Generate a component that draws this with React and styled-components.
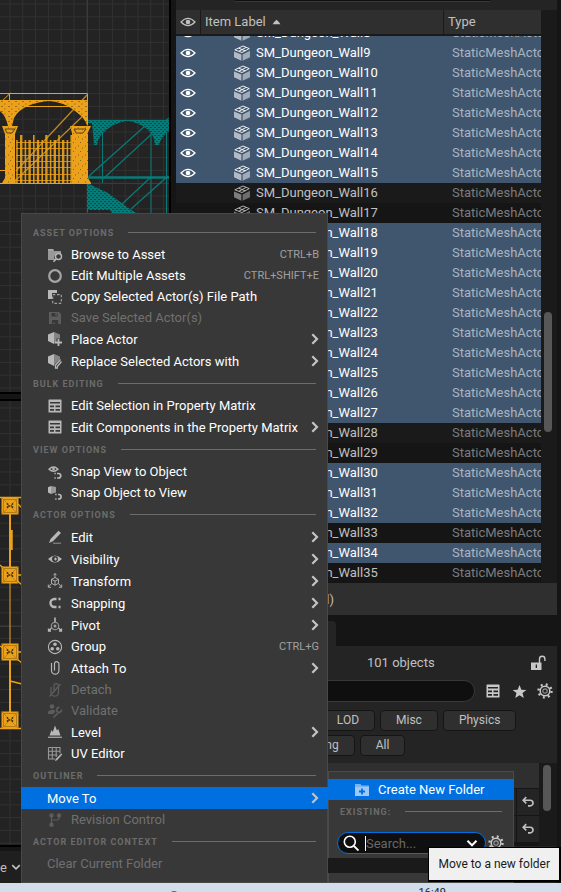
import React from "react";
import styled, { createGlobalStyle } from "styled-components";

const GlobalStyle = createGlobalStyle`
  * { box-sizing: border-box; }
  body {
    margin: 0;
    background: #151515;
    font-family: Roboto, "Liberation Sans", sans-serif;
    font-size: 13px;
    color: #c0c0c0;
  }
  button, input {
    font: inherit;
    color: inherit;
    margin: 0;
    border: 0;
    background: none;
  }
  svg { display: block; flex: none; }
`;

const Shell = styled.div`
  display: flex;
  flex-direction: column;
  height: 100vh;
  overflow: hidden;
`;

const Workspace = styled.main`
  position: relative;
  display: grid;
  grid-template-columns: 169px minmax(0, 1fr);
  flex: 1;
  min-height: 0;
`;

/* ---------- viewports ---------- */

const ViewportColumn = styled.section`
  display: flex;
  flex-direction: column;
  min-height: 0;
`;

const Viewport = styled.div`
  flex: ${(p) => (p.$grow ? "1 1 0" : "0 0 392px")};
  min-height: 0;
  overflow: hidden;
  background: #232323;
`;

const Splitter = styled.div`
  height: ${(p) => p.$size}px;
  flex: none;
  background: #151515;
  border-top: 2px solid #000;
  border-bottom: ${(p) => (p.$closed ? "2px solid #000" : "0")};
`;

const ViewportFooter = styled.div`
  display: flex;
  align-items: center;
  gap: 4px;
  height: 32px;
  flex: none;
  background: #1f1f1f;
`;

/* ---------- right side ---------- */

const SideColumn = styled.section`
  display: flex;
  flex-direction: column;
  min-width: 0;
  min-height: 0;
  overflow: hidden;
  padding: 0 4px 0 5px;
  border-left: 2px solid #000;
  background: #151515;
`;

const OutlinerTop = styled.div`
  height: 10px;
  flex: none;
  padding: 0 66px 0 58px;
  background: #242424;
`;

const OutlinerSearchEdge = styled.div`
  height: 2px;
  background: #0f0f0f;
  border-bottom: 1px solid #383838;
  border-radius: 0 0 8px 8px;
`;

const OutlinerBody = styled.div`
  display: flex;
  flex: none;
  background: #1a1a1a;
`;

const OutlinerClip = styled.div`
  flex: 1;
  min-width: 0;
`;

const OutlinerTable = styled.table`
  width: 100%;
  table-layout: fixed;
  border-collapse: separate;
  border-spacing: 0;
`;

const HeadCell = styled.th`
  width: ${(p) => p.$width || "auto"};
  height: 26px;
  padding: 0 0 0 4px;
  background: #2f2f2f;
  border-bottom: 2px solid #1a1a1a;
  border-left: ${(p) => (p.$first ? "0" : "1px solid #1a1a1a")};
  text-align: left;
  font-weight: 400;
  line-height: 20px;
  white-space: nowrap;
`;

const HeadLabel = styled.span`
  display: flex;
  align-items: center;
  gap: 6px;
`;

const ActorRow = styled.tr`
  background: ${(p) => (p.$selected ? "#40566f" : p.$even ? "#1a1a1a" : "#151515")};
  color: ${(p) => (p.$selected ? "#ffffff" : "#c0c0c0")};
`;

const ActorCell = styled.td`
  padding: 0 0 0 ${(p) => p.$pad}px;
  overflow: hidden;
`;

const CellContent = styled.div`
  display: flex;
  align-items: flex-end;
  height: ${(p) => (p.$clipped ? 7 : 20)}px;
  overflow: hidden;
  white-space: nowrap;
  color: ${(p) => (p.$type ? (p.$selected ? "#a9b4bf" : "#7c7c7c") : "inherit")};
`;

const CellLine = styled.span`
  display: flex;
  align-items: center;
  gap: 6px;
  flex: none;
  height: 20px;
  line-height: 18px;
`;

const ScrollGutter = styled.div`
  width: ${(p) => p.$width}px;
  flex: none;
  padding: ${(p) => p.$offset}px 5px 0 3px;
  background: #1a1a1a;
`;

const ScrollThumb = styled.div`
  width: 8px;
  height: ${(p) => p.$length}px;
  margin: 0 auto;
  border-radius: 4px;
  background: #575757;
`;

const StatusBar = styled.div`
  display: flex;
  align-items: center;
  height: 32px;
  flex: none;
  padding-left: 10px;
  background: #2f2f2f;
`;

const TabStrip = styled.div`
  display: flex;
  align-items: flex-end;
  height: 31px;
  flex: none;
`;

const Tab = styled.button`
  width: 160px;
  height: 25px;
  border-radius: 4px 4px 0 0;
  background: #242424;
`;

const DetailsPanel = styled.div`
  display: flex;
  flex-direction: column;
  flex: 1;
  min-height: 0;
  background: #242424;
`;

const DetailsSummary = styled.div`
  display: flex;
  align-items: center;
  justify-content: space-between;
  height: 33px;
  flex: none;
  padding: 0 4px 0 191px;
`;

const DetailsTools = styled.div`
  display: flex;
  align-items: center;
  height: 24px;
  flex: none;
  gap: 10px;
  padding: 0 4px 0 8px;
`;

const DetailsSearch = styled.input`
  flex: 1;
  min-width: 0;
  height: 22px;
  border: 1px solid #383838;
  border-radius: 11px;
  background: #0f0f0f;
`;

const IconButton = styled.button`
  display: grid;
  place-items: center;
  flex: none;
  width: ${(p) => p.$width || 16}px;
  height: 16px;
  padding: 0;
  color: #c8c8c8;
`;

const Chips = styled.div`
  padding-top: 7px;
`;

const ChipRow = styled.div`
  display: flex;
  gap: 5px;
  flex: none;
  height: 25px;
  padding-left: ${(p) => p.$pad}px;
`;

const Chip = styled.button`
  height: 21px;
  padding: 0 15px;
  border: 1px solid #151515;
  border-radius: 4px;
  background: #2f2f2f;
  font-size: 12px;
  line-height: 19px;
`;

const Properties = styled.div`
  display: flex;
  flex: none;
  height: 83px;
  margin-top: 3px;
`;

const PropertyRows = styled.div`
  flex: 1;
  background: #151515;
`;

const PropertyRow = styled.div`
  display: flex;
  justify-content: flex-end;
  gap: 1px;
  height: ${(p) => (p.$head ? 26 : 27)}px;
  border-bottom: 1px solid #151515;
  background: ${(p) => (p.$head ? "#2f2f2f" : "#151515")};
`;

const PropertyValue = styled.div`
  flex: 1;
  background: #242424;
`;

const ResetCell = styled.div`
  display: grid;
  place-items: center;
  width: 22px;
  background: #242424;
`;

/* ---------- menus ---------- */

const MenuPanel = styled.div`
  position: absolute;
  left: 21px;
  top: 213px;
  width: 307px;
  padding: 8px 0 9px;
  background: #383838;
  box-shadow: inset 0 0 0 1px #484848;
`;

const MenuHeading = styled.div`
  display: flex;
  align-items: center;
  gap: 14px;
  height: 23px;
  padding: 0 12px;
  font-size: 9px;
  font-weight: 700;
  letter-spacing: 1px;
  color: #6c6c6c;
  white-space: nowrap;

  &::after {
    content: "";
    flex: 1;
    height: 1px;
    background: #6c6c6c;
  }
`;

const MenuRow = styled.button`
  display: flex;
  align-items: center;
  gap: 8px;
  width: 100%;
  height: ${(p) => (p.$tall ? 22 : 21)}px;
  padding: 0 9px 0 26px;
  text-align: left;
  white-space: nowrap;
  color: ${(p) => (p.disabled ? "#707070" : "#ffffff")};
  background: ${(p) => (p.$active ? "#0070e0" : "transparent")};
`;

const MenuIcon = styled.span`
  color: ${(p) => (p.$off ? "#5c5c5c" : "#b8b8b8")};
`;

const MenuLabel = styled.span`
  flex: 1;
`;

const Shortcut = styled.kbd`
  font-family: inherit;
  font-size: 11px;
  color: #a0a0a0;
`;

const SubMenu = styled.div`
  position: absolute;
  left: 328px;
  top: 771px;
  bottom: 0;
  width: 186px;
  padding-top: 8px;
  background: #383838;
  box-shadow: inset 0 0 0 1px #4a4a4a;
`;

const SubMenuAction = styled.button`
  display: flex;
  align-items: center;
  gap: 8px;
  width: 100%;
  height: 21px;
  padding: 0 26px;
  background: #0070e0;
  color: #ffffff;
  white-space: nowrap;
`;

const FolderSearchRow = styled.div`
  display: flex;
  align-items: center;
  gap: 2px;
  height: 22px;
  margin: 9px 10px 4px 9px;
`;

const FolderSearch = styled.label`
  display: flex;
  align-items: center;
  gap: 6px;
  flex: 1;
  min-width: 0;
  height: 22px;
  padding: 0 7px 0 5px;
  border: 1px solid #0070e0;
  border-radius: 11px;
  background: #0f0f0f;
  color: #ffffff;
`;

const FolderInput = styled.input`
  flex: 1;
  min-width: 0;
  width: 0;
  height: 15px;
  padding: 0;
  border-left: 1px solid #ffffff;
  outline: none;
  &::placeholder { color: #686868; opacity: 1; }
`;

const FolderList = styled.div`
  height: 15px;
  background: #1a1a1a;
`;

const Tooltip = styled.div`
  position: absolute;
  right: 0;
  bottom: 1px;
  padding: 8px 9px;
  border: 1px solid #000;
  border-width: 1px 2px 2px 1px;
  background: #f0f0f0;
  color: #1a1a1a;
  font-size: 12px;
  line-height: 16px;
  white-space: nowrap;
`;

const Taskbar = styled.footer`
  display: flex;
  align-items: flex-start;
  justify-content: space-between;
  height: 9px;
  flex: none;
  overflow: hidden;
  padding: 3px 115px 0 168px;
  background: #d3deec;
  color: #222;
  font-size: 11px;
`;

/* ---------- icons ---------- */

const strokeProps = { fill: "none", stroke: "currentColor" };

const iconShapes = {
  browse: (
    <>
      <path d="M1 2h5l1 2h7v3.2a4 4 0 0 0-5.500 5.800H1z" fill="currentColor" opacity=".75" />
      <path d="M1 2h5l1 1.500H1z" fill="currentColor" opacity=".6" />
      <circle cx="11.500" cy="9.500" r="3" {...strokeProps} strokeWidth="1.400" />
      <path d="M9.300 11.800L6.500 14.800" {...strokeProps} strokeWidth="1.600" />
    </>
  ),
  ring: <circle cx="8" cy="8" r="5.800" {...strokeProps} strokeWidth="2.200" opacity=".85" />,
  copy: (
    <>
      <path d="M1 1h9v3H5v6H1z" fill="currentColor" />
      <rect x="5.700" y="5.700" width="8.600" height="8.600" {...strokeProps} strokeWidth="1.200" strokeDasharray="2.600 1.700" opacity=".8" />
    </>
  ),
  save: (
    <path fillRule="evenodd" d="M2 2h10l2 2v10H2zM4.500 3v3.500h6V3zM8.300 3h1.500v2.500H8.300zM5 10v4h1.200v-1.500h1.500V14h3.500v-4z" fill="currentColor" />
  ),
  place: (
    <>
      <path d="M7 1l6 2.500v4h-3.500v3.100L7 13z" fill="currentColor" opacity=".6" />
      <path d="M1 3.500L7 1v12l-6-3z" fill="currentColor" />
      <path d="M11.500 8v7M8 11.500h7" {...strokeProps} strokeWidth="1.800" />
    </>
  ),
  replace: (
    <>
      <path d="M1 3.500L7 1v12l-6-3z" fill="currentColor" />
      <path d="M7 1l6 2.500V6L8 11l-1 2z" fill="currentColor" opacity=".6" />
      <path d="M8.300 12.500L13.500 6.500M10 14l4.500-5.500M8.500 12v3h2.500" {...strokeProps} strokeWidth="1.300" />
    </>
  ),
  matrix: (
    <path
      fillRule="evenodd"
      d="M2 1.500h12a.5.5 0 0 1 .5.5v12a.5.5 0 0 1-.5.5H2a.5.5 0 0 1-.5-.5V2a.5.5 0 0 1 .5-.5zM3 4v1.500h10V4zM3 7.500v1.800h4V7.500zM8.500 7.500v1.800H13V7.500zM3 11v1.800h4V11zM8.500 11v1.800H13V11z"
      fill="currentColor"
    />
  ),
  snapView: (
    <>
      <path d="M2 5.200Q6.500 .8 11 5.200Q6.500 9.200 2 5.200z" {...strokeProps} strokeWidth="1.300" />
      <circle cx="6.500" cy="5" r="1.300" fill="currentColor" />
      <path d="M10 9.500h1.500a2.200 2.200 0 0 1 0 4.500H10" {...strokeProps} strokeWidth="1.700" />
      <path d="M7.400 9.500h1.400M7.400 14h1.400" {...strokeProps} strokeWidth="1.700" />
    </>
  ),
  snapObject: (
    <>
      <path d="M1 2.200L4 1v8L1 7.500z" fill="currentColor" />
      <path d="M4 1l5 1v5.500L4 9z" fill="currentColor" opacity=".75" />
      <path d="M11 9.500h.8a2.200 2.200 0 0 1 0 4.500H11" {...strokeProps} strokeWidth="1.700" />
      <path d="M8.200 9.500h1.400M8.200 14h1.400" {...strokeProps} strokeWidth="1.700" />
    </>
  ),
  edit: (
    <>
      <path d="M11.500 1.800l2.500 2.300L6 12.300l-4 1.700 1.500-4z" fill="currentColor" />
      <path d="M6 14.200h8" {...strokeProps} strokeWidth="1" opacity=".7" />
    </>
  ),
  eye: (
    <>
      <path d="M1 8Q8 .8 15 8Q8 15.200 1 8z" {...strokeProps} strokeWidth="1.200" />
      <circle cx="8" cy="8" r="2.300" fill="currentColor" />
    </>
  ),
  eyeSolid: (
    <path fillRule="evenodd" d="M1 8Q8 1 15 8Q8 15 1 8zM8 5a3 3 0 1 0 .01 6A3 3 0 0 0 8 5zM8.500 6.300L10 8 8.500 9.800 7 8z" fill="currentColor" />
  ),
  transform: (
    <path d="M8 .5v4M8 4.500L4.500 6.300v4L8 12.200l3.500-1.900v-4zM4.500 6.300L8 8.200l3.500-1.900M8 8.200v4M4.500 10.500l-3 3.500M11.500 10.500l3 3.500M6.500 2.200L8 .5l1.500 1.700M1.300 11.500V14.300h2.800M14.700 11.500v2.800h-2.800" {...strokeProps} strokeWidth="1" opacity=".9" />
  ),
  magnet: (
    <>
      <path d="M9.500 4H7.500a4 4 0 0 0 0 8h2" {...strokeProps} strokeWidth="2.400" />
      <path d="M11.500 4h2M11.500 12h2" {...strokeProps} strokeWidth="2.400" />
    </>
  ),
  pivot: (
    <>
      <path d="M8 .5v4.500" {...strokeProps} strokeWidth="1.600" />
      <path d="M4.500 11l-3 3M11.500 11l3 3M1.500 11.500V14H4M14.500 11.500V14H12" {...strokeProps} strokeWidth="1.300" />
      <circle cx="8" cy="9" r="3.700" {...strokeProps} strokeWidth="1.200" opacity=".7" />
      <circle cx="8" cy="9" r="1.500" fill="currentColor" opacity=".8" />
    </>
  ),
  group: (
    <>
      <circle cx="8" cy="8" r="6.600" {...strokeProps} strokeWidth="1.100" />
      <circle cx="8" cy="5.200" r="1.800" fill="currentColor" />
      <circle cx="5.200" cy="9.700" r="1.800" fill="currentColor" />
      <circle cx="10.800" cy="9.700" r="1.800" fill="currentColor" />
    </>
  ),
  clip: (
    <path d="M4.500 3v7.500a3.700 3.700 0 0 0 7.400 0V4.500a2.200 2.200 0 0 0-4.400-1V10.500" {...strokeProps} strokeWidth="1.200" />
  ),
  detach: (
    <>
      <path d="M4 5v6a3.800 3.800 0 0 0 7.500 0V4.500a2.300 2.300 0 0 0-4.500-1V10" {...strokeProps} strokeWidth="1.300" />
      <path d="M13.500 2L2.500 14.500" {...strokeProps} strokeWidth="1.400" />
    </>
  ),
  validate: (
    <>
      <circle cx="5" cy="3.500" r="2.300" fill="currentColor" />
      <path d="M1 11V8.500Q5 5.500 8.500 8l-2 3z" fill="currentColor" />
      <path d="M6.500 14.500l5-5M14.500 6.500a2.500 2.500 0 1 1-2-2" {...strokeProps} strokeWidth="1.700" />
    </>
  ),
  level: (
    <>
      <path d="M2.500 11.500L4.500 6l1.300 2L8 1.500l2 5 1.300-1.500 2.200 6.500z" fill="currentColor" />
      <path d="M1 13.300h14" {...strokeProps} strokeWidth="1.400" opacity=".8" />
    </>
  ),
  uv: (
    <>
      <path d="M1.500 1.500h11.500v6M8 13H1.500V1.500M1.500 5.200H13M1.500 9h9M5.300 1.500V13M9.200 1.500V11" {...strokeProps} strokeWidth="1.100" opacity=".75" />
      <path d="M14.300 7.500l1 1-5.300 5.700-2 .8.700-2z" fill="currentColor" />
    </>
  ),
  branch: (
    <>
      <circle cx="4.500" cy="3.500" r="2.200" fill="currentColor" />
      <circle cx="12" cy="3.500" r="2.200" fill="currentColor" />
      <circle cx="4.500" cy="12.800" r="2.200" fill="currentColor" />
      <path d="M4.500 3.500v9M12 4v2.500Q12 8 10 8H4.500" {...strokeProps} strokeWidth="1.200" />
    </>
  ),
  mesh: (
    <>
      <path d="M0 6.500l7.400 3v6.300L0 12.300z" fill="currentColor" opacity=".6" />
      <path d="M8.600 9.500L16 5.800v6.400l-7.400 3.600z" fill="currentColor" opacity=".5" />
      <path d="M.8 4.800L9 1l6.300 2.600L8 7.500zM4.700 3.200l6.500 2.600M5 6.200l7-3.700" {...strokeProps} strokeWidth="1" opacity=".9" />
    </>
  ),
  sortUp: <path d="M1 11Q2 8 8 3q6 5 7 8z" fill="currentColor" />,
  unlock: (
    <>
      <path fillRule="evenodd" d="M1 7.500h10.500V15H1zM5.700 9.500v3.500h1.300V9.500z" fill="currentColor" />
      <path d="M9.500 8V4a2.700 2.700 0 0 1 5.400 0v2" {...strokeProps} strokeWidth="1.400" />
    </>
  ),
  star: <path d="M8 1l2 5 5.300.3-4.100 3.400 1.400 5.200L8 12l-4.600 2.900 1.400-5.200L.7 6.300 6 6z" fill="currentColor" />,
  gear: (
    <>
      <circle cx="8" cy="8" r="4.800" {...strokeProps} strokeWidth="1.500" />
      <circle cx="8" cy="8" r="2.200" {...strokeProps} strokeWidth="1.200" opacity=".65" />
      <circle cx="8" cy="8" r="6.500" {...strokeProps} strokeWidth="2.400" strokeDasharray="1.900 3.205" />
    </>
  ),
  reset: <path d="M6 2.500L2.500 6 6 9.500M2.500 6H10.500a3.200 3.200 0 0 1 0 6.400H8" {...strokeProps} strokeWidth="1.900" />,
  search: (
    <>
      <circle cx="6.800" cy="6.800" r="5.500" {...strokeProps} strokeWidth="1.600" />
      <path d="M10.800 10.800l4.700 4.700" {...strokeProps} strokeWidth="1.900" />
    </>
  ),
  down: <path d="M2 5l6 6 6-6" {...strokeProps} strokeWidth="2.600" />,
  newFolder: (
    <>
      <path d="M1 2h5.500l1 1.500H15V5H1z" fill="#79b4f0" />
      <path d="M1 5h14v9H1z" fill="#9cc9f5" />
      <path d="M8 6.500v6M5 9.500h6" fill="none" stroke="#0070e0" strokeWidth="1.800" />
    </>
  ),
};

function Icon({ name, size = 16 }) {
  return (
    <svg width={size} height={size} viewBox="0 0 16 16" aria-hidden="true">
      {iconShapes[name]}
    </svg>
  );
}

function Chevron() {
  return (
    <svg width="8" height="12" viewBox="0 0 8 12" aria-hidden="true">
      <path d="M1.300 1.300L6 6l-4.700 4.700" fill="none" stroke="#c4c4c4" strokeWidth="2.200" />
    </svg>
  );
}

/* ---------- wireframe scenes ---------- */

const ORANGE = "#eba21a";
const TEAL = "#087b78";

function GridPattern({ id, x, y }) {
  return (
    <pattern id={id} x={x} y={y} width="12.8" height="12.8" patternUnits="userSpaceOnUse">
      <path d="M0 .5H12.8M.5 0V12.8" stroke="#303030" strokeWidth="1" fill="none" />
    </pattern>
  );
}

function FrontScene() {
  const bars = Array.from({ length: 14 }, (_, i) => 17 + i * 4.2);
  const rails = [142, 148, 155, 161, 167, 174, 180];
  return (
    <svg width="100%" height="100%" aria-hidden="true">
      <defs>
        <GridPattern id="gridFront" x="9.500" y="3.500" />
        <pattern id="meshOrange" width="7" height="5" patternUnits="userSpaceOnUse">
          <rect width="7" height="5" fill={ORANGE} />
          <path d="M1 1.500h2M4 4h1.500" stroke="#8b601a" strokeWidth=".8" />
        </pattern>
        <pattern id="meshTeal" width="4" height="4" patternUnits="userSpaceOnUse">
          <rect width="4" height="4" fill={TEAL} />
          <path d="M0 1.500h2M2 3.500h2" stroke="#164544" strokeWidth="1" />
        </pattern>
        <pattern id="stone" width="7" height="9" patternUnits="userSpaceOnUse">
          <rect width="7" height="9" fill={ORANGE} />
          <path d="M1 2h1M5 4h1M3 7.500h1" stroke="#8b601a" strokeWidth="1" />
        </pattern>
      </defs>
      <rect width="100%" height="100%" fill="url(#gridFront)" />
      <path d="M87.500 0V392" stroke="#3a3a3a" />
      <path d="M92 183.500H169" stroke="#a30d0d" />
      <g stroke={TEAL} fill="none">
        <path d="M87.500 120V212M102.500 124V183M151 124V213M166.500 121V213" />
        <path d="M89 176L145 126M104 178L169 118M121 205L151 177M131 209L168 176M113 213L121 205" strokeWidth="1.200" />
        <path d="M87 177.500H169" strokeWidth="2.500" />
      </g>
      <path d="M88 120H169V131Q161 137 159 145H155Q154 134 147 129Q136 121 126 121Q112 123 101 135Q98 139 97 145H94L92 123H88z" fill="url(#meshTeal)" />
      <path d="M87 183L108 193 127 207 136 213H112L110 210H87z" fill="url(#meshTeal)" />
      <g stroke={ORANGE} fill="none">
        <path d="M0 93.500H87.500V125M0 103L10.500 93M9.500 93V126M0 170.500H5M24 106.500H84" />
        <path d="M16 171L87 95M16 180L87 112" strokeWidth="1.200" opacity=".8" />
        {bars.map((x, i) => (
          <path key={x} d={`M${x} ${i % 3 === 1 ? 135 : 140}V183`} strokeWidth={i % 2 ? 2.4 : 1.6} opacity=".9" />
        ))}
        {rails.map((y) => (
          <path key={y} d={`M16 ${y}.500H72`} opacity=".8" />
        ))}
        <path d="M0 183.500H91" />
      </g>
      <path d="M0 100H87V125Q84 118 80 115Q71 107 63 104Q55 101 48 101Q38 102 30 105Q18 110 14 118L12 126H8Q6 116 0 111z" fill="url(#meshOrange)" />
      <path d="M2 126H18L15 134V178L17 183H2L5 178V134zM70 126H91L88 132V178L91 183H70L72 178V133z" fill="url(#stone)" />
      <path d="M5 129H15L12 133H7zM74 129H86L83 133H76z" fill="none" stroke="#5b4218" />
    </svg>
  );
}

function TopScene() {
  const posts = [105, 174, 251, 319];
  return (
    <svg width="100%" height="100%" aria-hidden="true">
      <defs>
        <GridPattern id="gridTop" x="9.500" y="6.500" />
      </defs>
      <rect width="100%" height="100%" fill="url(#gridTop)" />
      <path d="M0 225.500H169" stroke="#3a3a3a" />
      <g stroke={ORANGE} fill="none">
        <path d="M10 105V174M10 252V328" strokeWidth="2" />
        <path d="M11.500 129V149" strokeWidth="2.500" />
        <path d="M10 174V252" strokeWidth="2" opacity=".5" />
        <path d="M0 96.500H21M0 327.500H21M18 103l4 4M0 164l22 20M18 174H22M0 245l22 17M18 251H22M10 280l12 3" strokeWidth="1.300" />
      </g>
      {posts.map((y) => (
        <g key={y} transform={`translate(10 ${y})`}>
          <rect x="-8.500" y="-8.500" width="17" height="17" fill={ORANGE} />
          <rect x="-6.500" y="-6.500" width="13" height="13" fill="none" stroke="#b57b15" />
          <path d="M-8 -8L8 8M8 -8L-8 8" stroke="#b57b15" strokeWidth=".8" />
          <path d="M-2.500 -3V3M2.500 -3V3M-2 0H2" stroke="#4d3814" strokeWidth="1.400" strokeDasharray="2 1" />
        </g>
      ))}
    </svg>
  );
}

/* ---------- data ---------- */

const unselected = new Set([16, 17, 28, 29, 33, 35]);
const actors = Array.from({ length: 28 }, (_, i) => {
  const n = i + 8;
  return { n, name: `SM_Dungeon_Wall${n}`, type: "StaticMeshActor", selected: !unselected.has(n) };
});

const menu = [
  {
    title: "ASSET OPTIONS",
    items: [
      { icon: "browse", label: "Browse to Asset", keys: "CTRL+B" },
      { icon: "ring", label: "Edit Multiple Assets", keys: "CTRL+SHIFT+E" },
      { icon: "copy", label: "Copy Selected Actor(s) File Path" },
      { icon: "save", label: "Save Selected Actor(s)", off: true },
      { icon: "place", label: "Place Actor", sub: true },
      { icon: "replace", label: "Replace Selected Actors with", sub: true },
    ],
  },
  {
    title: "BULK EDITING",
    items: [
      { icon: "matrix", label: "Edit Selection in Property Matrix" },
      { icon: "matrix", label: "Edit Components in the Property Matrix", sub: true },
    ],
  },
  {
    title: "VIEW OPTIONS",
    items: [
      { icon: "snapView", label: "Snap View to Object" },
      { icon: "snapObject", label: "Snap Object to View" },
    ],
  },
  {
    title: "ACTOR OPTIONS",
    items: [
      { icon: "edit", label: "Edit", sub: true },
      { icon: "eyeSolid", label: "Visibility", sub: true },
      { icon: "transform", label: "Transform", sub: true },
      { icon: "magnet", label: "Snapping", sub: true },
      { icon: "pivot", label: "Pivot", sub: true },
      { icon: "group", label: "Group", keys: "CTRL+G" },
      { icon: "clip", label: "Attach To", sub: true },
      { icon: "detach", label: "Detach", off: true },
      { icon: "validate", label: "Validate", off: true },
      { icon: "level", label: "Level", sub: true },
      { icon: "uv", label: "UV Editor" },
    ],
  },
  {
    title: "OUTLINER",
    items: [
      { label: "Move To", sub: true, active: true },
      { icon: "branch", label: "Revision Control", off: true },
    ],
  },
  {
    title: "ACTOR EDITOR CONTEXT",
    items: [{ label: "Clear Current Folder", off: true }],
  },
];

/* ---------- parts ---------- */

function Outliner() {
  return (
    <OutlinerBody>
      <OutlinerClip>
        <OutlinerTable>
          <thead>
            <tr>
              <HeadCell $width="24px" $first aria-label="Visibility"><Icon name="eye" /></HeadCell>
              <HeadCell>
                <HeadLabel>Item Label <Icon name="sortUp" size={9} /></HeadLabel>
              </HeadCell>
              <HeadCell $width="98px">Type</HeadCell>
            </tr>
          </thead>
          <tbody>
            {actors.map(({ n, name, type, selected }) => {
              const clipped = n === 8;
              return (
                <ActorRow key={n} $selected={selected} $even={n % 2 === 0}>
                  <ActorCell $pad={4}>
                    <CellContent $clipped={clipped}>
                      <CellLine>{selected && <Icon name="eye" />}</CellLine>
                    </CellContent>
                  </ActorCell>
                  <ActorCell $pad={34}>
                    <CellContent $clipped={clipped}>
                      <CellLine><Icon name="mesh" />{name}</CellLine>
                    </CellContent>
                  </ActorCell>
                  <ActorCell $pad={9}>
                    <CellContent $clipped={clipped} $type $selected={selected}>
                      <CellLine>{type}</CellLine>
                    </CellContent>
                  </ActorCell>
                </ActorRow>
              );
            })}
          </tbody>
        </OutlinerTable>
      </OutlinerClip>
      <ScrollGutter $width={16} $offset={302}><ScrollThumb $length={120} /></ScrollGutter>
    </OutlinerBody>
  );
}

function FilterChips() {
  return (
    <Chips>
      <ChipRow $pad={67}>
        <Chip>General</Chip>
        <Chip>LOD</Chip>
        <Chip>Misc</Chip>
        <Chip>Physics</Chip>
      </ChipRow>
      <ChipRow $pad={92}>
        <Chip>Streaming</Chip>
        <Chip>All</Chip>
      </ChipRow>
    </Chips>
  );
}

function Details() {
  return (
    <DetailsPanel>
      <DetailsSummary>
        <span>101 objects</span>
        <IconButton $width={30} aria-label="Unlock"><Icon name="unlock" /></IconButton>
      </DetailsSummary>
      <DetailsTools>
        <DetailsSearch type="text" aria-label="Search details" />
        <IconButton aria-label="Property matrix"><Icon name="matrix" /></IconButton>
        <IconButton aria-label="Favorites"><Icon name="star" size={15} /></IconButton>
        <IconButton aria-label="Settings"><Icon name="gear" /></IconButton>
      </DetailsTools>
      <FilterChips />
      <Properties>
        <PropertyRows>
          <PropertyRow $head />
          <PropertyRow><PropertyValue /><ResetCell><Icon name="reset" size={14} /></ResetCell></PropertyRow>
          <PropertyRow><PropertyValue /><ResetCell><Icon name="reset" size={14} /></ResetCell></PropertyRow>
        </PropertyRows>
        <ScrollGutter $width={18} $offset={2}><ScrollThumb $length={46} /></ScrollGutter>
      </Properties>
    </DetailsPanel>
  );
}

function ContextMenu() {
  return (
    <MenuPanel role="menu">
      {menu.map((section) => (
        <React.Fragment key={section.title}>
          <MenuHeading>{section.title}</MenuHeading>
          {section.items.map((item) => (
            <MenuRow key={item.label} role="menuitem" disabled={item.off} $tall={item.sub} $active={item.active}>
              {item.icon && <MenuIcon $off={item.off}><Icon name={item.icon} /></MenuIcon>}
              <MenuLabel>{item.label}</MenuLabel>
              {item.keys && <Shortcut>{item.keys}</Shortcut>}
              {item.sub && <Chevron />}
            </MenuRow>
          ))}
        </React.Fragment>
      ))}
    </MenuPanel>
  );
}

function MoveToMenu() {
  return (
    <SubMenu role="menu">
      <SubMenuAction role="menuitem"><Icon name="newFolder" />Create New Folder</SubMenuAction>
      <MenuHeading>EXISTING:</MenuHeading>
      <FolderSearchRow>
        <FolderSearch>
          <Icon name="search" />
          <FolderInput type="text" placeholder="Search..." aria-label="Search folders" />
          <Icon name="down" size={12} />
        </FolderSearch>
        <IconButton aria-label="Search settings"><Icon name="gear" /></IconButton>
      </FolderSearchRow>
      <FolderList />
    </SubMenu>
  );
}

export default function App() {
  return (
    <Shell>
      <GlobalStyle />
      <Workspace>
        <ViewportColumn>
          <Viewport><FrontScene /></Viewport>
          <Splitter $size={9} $closed />
          <Viewport $grow><TopScene /></Viewport>
          <Splitter $size={6} />
          <ViewportFooter>e <Icon name="down" size={10} /></ViewportFooter>
        </ViewportColumn>
        <SideColumn>
          <OutlinerTop><OutlinerSearchEdge /></OutlinerTop>
          <Outliner />
          <StatusBar>101 actors (101 selected)</StatusBar>
          <TabStrip><Tab aria-label="Details" /></TabStrip>
          <Details />
        </SideColumn>
        <ContextMenu />
        <MoveToMenu />
        <Tooltip role="tooltip">Move to a new folder</Tooltip>
      </Workspace>
      <Taskbar>
        <svg width="12" height="12" viewBox="0 0 12 12" aria-hidden="true">
          <circle cx="6" cy="10" r="5" fill="#b33b3b" />
        </svg>
        <time>16:49</time>
      </Taskbar>
    </Shell>
  );
}
